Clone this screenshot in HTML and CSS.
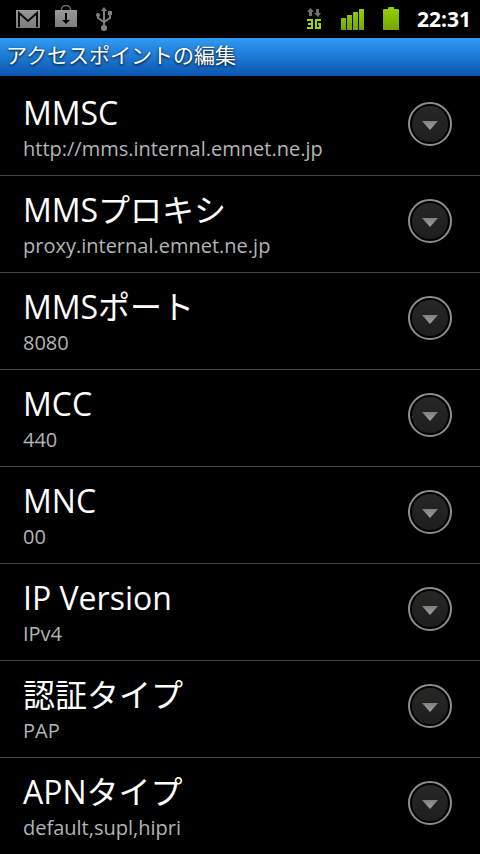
FILE: index.html
```html
<!DOCTYPE html>
<html lang="ja">
<head>
<meta charset="utf-8">
<meta name="viewport" content="width=device-width, initial-scale=1">
<title>アクセスポイントの編集</title>
<link rel="stylesheet" href="styles.css">
</head>
<body>
<svg class="defs" aria-hidden="true">
  <defs>
    <linearGradient id="disc" x1="0" y1="0" x2="0" y2="1"><stop offset="0" stop-color="#262825"/><stop offset="1" stop-color="#1e1e1e"/></linearGradient>
    <linearGradient id="arrow" x1="0" y1="0" x2="0" y2="1"><stop offset="0" stop-color="#808080"/><stop offset="1" stop-color="#a0a0a0"/></linearGradient>
    <linearGradient id="grey" x1="0" y1="0" x2="0" y2="1"><stop offset="0" stop-color="#989898"/><stop offset="1" stop-color="#7c7c7c"/></linearGradient>
    <linearGradient id="green" x1="0" y1="0" x2="0" y2="1"><stop offset="0" stop-color="#94d000"/><stop offset="1" stop-color="#78a400"/></linearGradient>
    <symbol id="more" viewBox="0 0 44 44">
      <circle cx="22" cy="22" r="21" fill="#000" stroke="#8e8e8e" stroke-width="2"/>
      <circle cx="22" cy="22" r="18" fill="url(#disc)"/>
      <path d="M14 19h16l-8 9z" fill="url(#arrow)"/>
    </symbol>
  </defs>
</svg>
<div class="status">
  <div class="notices">
    <svg width="24" height="18" viewBox="0 0 24 18" aria-label="Gmail"><path d="M0 0h24v18H0z" fill="url(#grey)"/><path d="M3 17V3l9 8 9-8v14" fill="none" stroke="#0c0c0c" stroke-width="2"/></svg>
    <svg width="22" height="28" viewBox="0 0 22 28" aria-label="Market"><path d="M6.500 6V4a4.500 3.500 0 0 1 9 0v2" fill="none" stroke="#707070" stroke-width="1.500"/><path d="M0 5h22v17H0z" fill="url(#grey)"/><path d="M10 8h2v7h3l-4 4-4-4h3z" fill="#000"/></svg>
    <svg class="usb" width="16" height="24" viewBox="0 0 16 24" aria-label="USB"><g fill="none" stroke="#808080" stroke-width="2"><path d="M8 3v17M2 8v3l6 4M14 7v4l-6 4"/></g><path d="M8 0l3 4H5zM12 4h4v4h-4z" fill="#808080"/><circle cx="2" cy="8" r="2" fill="#808080"/><circle cx="8" cy="21" r="3" fill="#808080"/></svg>
  </div>
  <div class="system">
    <svg width="16" height="22" viewBox="0 0 16 22" aria-label="3G"><path d="M3.500 0L7 4H5v4H2V4H0zM11 9L7 5h2V1h3v4h2z" fill="#707070"/><path d="M0 12h5v8H0M1 16h4M14 12H9v8h4v-4h-2" fill="none" stroke="#99d800" stroke-width="2"/></svg>
    <svg width="24" height="22" viewBox="0 0 24 22" aria-label="電波"><path d="M0 10h5v12H0zM6 7h5v15H6zM12 4h5v18h-5zM18 1h5v21h-5z" fill="url(#green)"/></svg>
    <svg width="16" height="24" viewBox="0 0 16 24" aria-label="電池"><path d="M5 1q0-1 1-1h4q1 0 1 1v1h4q1 0 1 1v20H0V3q0-1 1-1h4z" fill="url(#green)"/></svg>
    <time class="clock">22:31</time>
  </div>
</div>
<h1 class="titlebar">アクセスポイントの編集</h1>
<main>
<ul class="list">
  <li><button class="row" type="button"><span class="text"><span class="name">MMSC</span><span class="value">http://mms.internal.emnet.ne.jp</span></span><svg class="more" aria-hidden="true"><use href="#more"/></svg></button></li>
  <li><button class="row" type="button"><span class="text"><span class="name">MMSプロキシ</span><span class="value">proxy.internal.emnet.ne.jp</span></span><svg class="more" aria-hidden="true"><use href="#more"/></svg></button></li>
  <li><button class="row" type="button"><span class="text"><span class="name">MMSポート</span><span class="value">8080</span></span><svg class="more" aria-hidden="true"><use href="#more"/></svg></button></li>
  <li><button class="row" type="button"><span class="text"><span class="name">MCC</span><span class="value">440</span></span><svg class="more" aria-hidden="true"><use href="#more"/></svg></button></li>
  <li><button class="row" type="button"><span class="text"><span class="name">MNC</span><span class="value">00</span></span><svg class="more" aria-hidden="true"><use href="#more"/></svg></button></li>
  <li><button class="row" type="button"><span class="text"><span class="name">IP Version</span><span class="value">IPv4</span></span><svg class="more" aria-hidden="true"><use href="#more"/></svg></button></li>
  <li><button class="row" type="button"><span class="text"><span class="name">認証タイプ</span><span class="value">PAP</span></span><svg class="more" aria-hidden="true"><use href="#more"/></svg></button></li>
  <li><button class="row" type="button"><span class="text"><span class="name">APNタイプ</span><span class="value">default,supl,hipri</span></span><svg class="more" aria-hidden="true"><use href="#more"/></svg></button></li>
</ul>
</main>
</body>
</html>
```
FILE: styles.css
```css
* { box-sizing: border-box; }
body {
  margin: 0;
  background: #000;
  color: #fff;
  font-family: "Open Sans", "Noto Sans CJK JP", sans-serif;
}
.defs { position: absolute; width: 0; height: 0; }
.status {
  display: flex;
  justify-content: space-between;
  align-items: center;
  height: 38px;
  padding: 0 9px 0 16px;
}
.notices, .system { display: flex; align-items: center; }
.notices { gap: 15px; }
.usb { margin-left: 4px; }
.system { gap: 18px; }
.clock { font-size: 21px; font-weight: 700; line-height: 24px; }
.titlebar {
  margin: 0;
  padding: 0 6px;
  height: 38px;
  font-size: 21px;
  font-weight: 400;
  line-height: 34px;
  background: linear-gradient(#2f9bf4, #0a56b0);
  text-shadow: 0 1px 3px #000;
}
.list { margin: 0; padding: 3px 0 0; list-style: none; }
.row {
  display: flex;
  align-items: center;
  justify-content: space-between;
  width: 100%;
  min-height: 97px;
  padding: 0 28px 6px 23px;
  border: 0;
  border-bottom: 1px solid #444;
  background: #000;
  color: #fff;
  font: inherit;
  text-align: left;
}
.list li:last-child .row { border-bottom: 0; min-height: 96px; }
.text { display: flex; flex-direction: column; padding-top: 6px; }
.name { font-size: 32px; line-height: 44px; white-space: nowrap; }
.value { font-size: 20px; line-height: 28px; color: #b4b4b4; }
.more { flex: none; width: 44px; height: 44px; }
```
